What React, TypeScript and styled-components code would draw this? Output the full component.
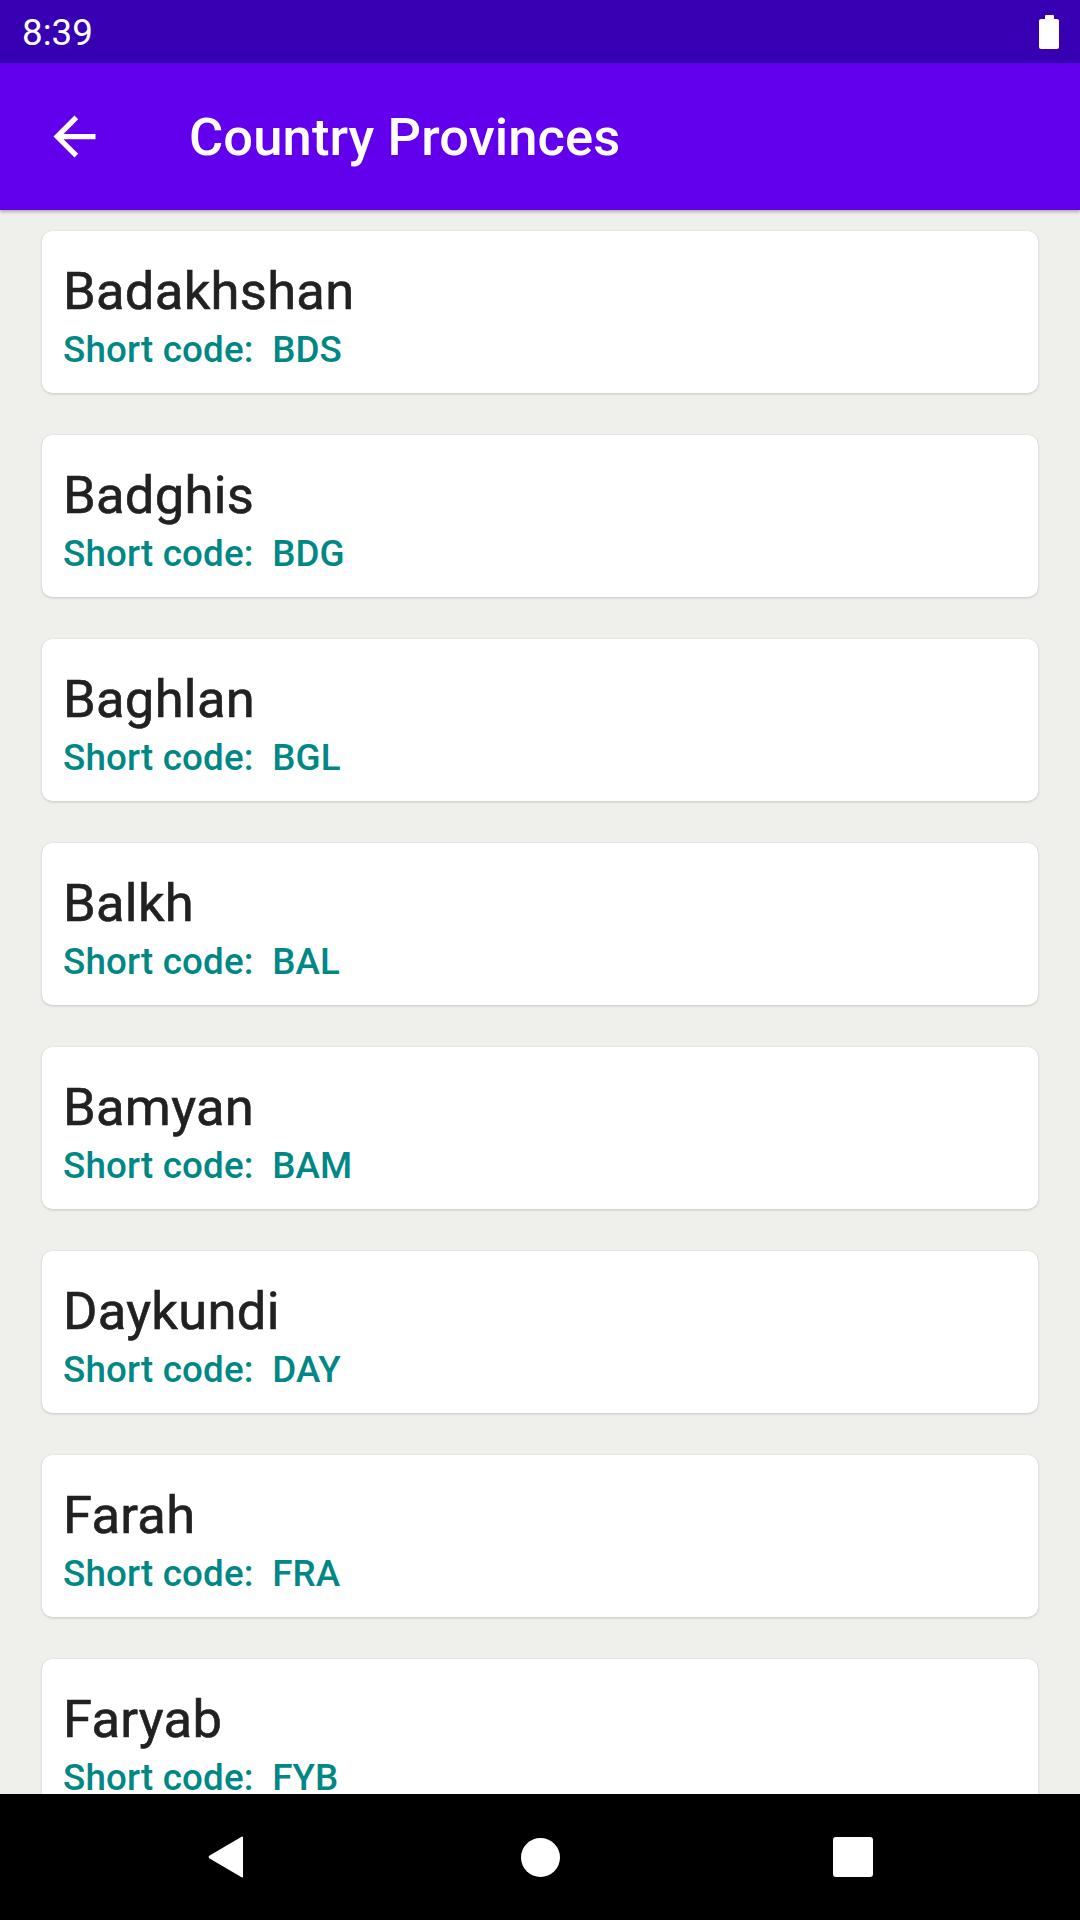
import React from "react";
import styled, { createGlobalStyle } from "styled-components";

type Province = { name: string; code: string };

const provinces: Province[] = [
  { name: "Badakhshan", code: "BDS" },
  { name: "Badghis", code: "BDG" },
  { name: "Baghlan", code: "BGL" },
  { name: "Balkh", code: "BAL" },
  { name: "Bamyan", code: "BAM" },
  { name: "Daykundi", code: "DAY" },
  { name: "Farah", code: "FRA" },
  { name: "Faryab", code: "FYB" },
  { name: "Ghazni", code: "GHA" },
];

function App() {
  return (
    <>
      <GlobalStyle />
      <S.Screen>
        <S.StatusBar>
          <S.Clock>8:39</S.Clock>
          <S.Battery>
            <S.BatteryCap />
            <S.BatteryBody />
          </S.Battery>
        </S.StatusBar>

        <S.AppBar>
          <S.NavButton aria-label="back">
            <svg width="63" height="63" viewBox="0 0 24 24" fill="#fff">
              <path d="M20 11H7.83l5.59-5.59L12 4l-8 8 8 8 1.41-1.41L7.83 13H20v-2z" />
            </svg>
          </S.NavButton>
          <S.Title>Country Provinces</S.Title>
        </S.AppBar>

        <S.List>
          {provinces.map((p) => (
            <S.Card key={p.code}>
              <S.Name>{p.name}</S.Name>
              <S.Code>Short code:&nbsp; {p.code}</S.Code>
            </S.Card>
          ))}
        </S.List>

        <S.NavBar>
          <S.NavSlot>
            <svg width="36" height="42" viewBox="0 0 36 42">
              <path d="M35 1.5 L35 40.5 Q35 42 33.6 41.2 L1.2 22.2 Q0 21 1.2 19.8 L33.6 0.8 Q35 0 35 1.5 Z" fill="#fff" />
            </svg>
          </S.NavSlot>
          <S.NavSlot>
            <S.HomeDot />
          </S.NavSlot>
          <S.NavSlot>
            <S.RecentSquare />
          </S.NavSlot>
        </S.NavBar>
      </S.Screen>
    </>
  );
}

const GlobalStyle = createGlobalStyle`
  html, body {
    margin: 0;
    padding: 0;
    background: #efefeb;
  }
  body {
    font-family: Roboto, "Noto Sans", "Liberation Sans", sans-serif;
  }
`;

//@styled
const S = {
  Screen: styled.div`
    width: 1080px;
    height: 1920px;
    display: flex;
    flex-direction: column;
    background: #efefeb;
    overflow: hidden;
  `,
  StatusBar: styled.div`
    height: 63px;
    flex: none;
    background: #3700b3;
    display: flex;
    align-items: center;
    justify-content: space-between;
    padding: 0 21px 0 22px;
    box-sizing: border-box;
  `,
  Clock: styled.span`
    color: #fff;
    font-size: 36.75px;
    line-height: 43px;
    margin-top: 1px;
  `,
  Battery: styled.div`
    display: flex;
    flex-direction: column;
    align-items: center;
    margin-top: 1px;
  `,
  BatteryCap: styled.div`
    width: 9px;
    height: 4px;
    background: #fff;
    border-radius: 1px 1px 0 0;
  `,
  BatteryBody: styled.div`
    width: 20px;
    height: 30px;
    background: #fff;
    border-radius: 2px;
  `,
  AppBar: styled.header`
    height: 147px;
    flex: none;
    background: #6200ee;
    display: flex;
    align-items: center;
    gap: 83px;
    padding-left: 43px;
    position: relative;
    z-index: 2;
    box-shadow: 0 2px 4px rgba(0, 0, 0, 0.22), 0 1px 2px rgba(0, 0, 0, 0.12);
  `,
  NavButton: styled.div`
    width: 63px;
    height: 63px;
    flex: none;
    display: flex;
  `,
  Title: styled.h1`
    margin: 0;
    color: #fff;
    font-size: 52.5px;
    font-weight: 500;
    line-height: 62px;
    letter-spacing: 0.1px;
  `,
  List: styled.main`
    flex: 1;
    overflow: hidden;
    display: flex;
    flex-direction: column;
    gap: 42px;
    padding: 21px 42px 0 42px;
    box-sizing: border-box;
  `,
  Card: styled.section`
    height: 162px;
    flex: none;
    background: #fff;
    border-radius: 10px;
    box-shadow: 0 1px 3px rgba(0, 0, 0, 0.16), 0 0 1px rgba(0, 0, 0, 0.12);
    padding: 29px 21px 0 21px;
    box-sizing: border-box;
    display: flex;
    flex-direction: column;
    gap: 6px;
  `,
  Name: styled.div`
    color: #212121;
    font-size: 52.5px;
    line-height: 62px;
    font-weight: 400;
    letter-spacing: 0.3px;
    -webkit-text-stroke: 0.6px #212121;
  `,
  Code: styled.div`
    color: #018786;
    font-size: 36.75px;
    line-height: 43px;
    font-weight: 500;
    letter-spacing: 0.15px;
  `,
  NavBar: styled.nav`
    height: 126px;
    flex: none;
    background: #000;
    display: flex;
    justify-content: center;
    position: relative;
    z-index: 2;
  `,
  NavSlot: styled.div`
    width: 313px;
    display: flex;
    align-items: center;
    justify-content: center;
    &:first-child {
      padding-right: 2px;
      box-sizing: border-box;
    }
  `,
  HomeDot: styled.div`
    width: 39px;
    height: 39px;
    border-radius: 50%;
    background: #fff;
  `,
  RecentSquare: styled.div`
    width: 40px;
    height: 40px;
    border-radius: 3px;
    background: #fff;
  `,
};

export default App;
